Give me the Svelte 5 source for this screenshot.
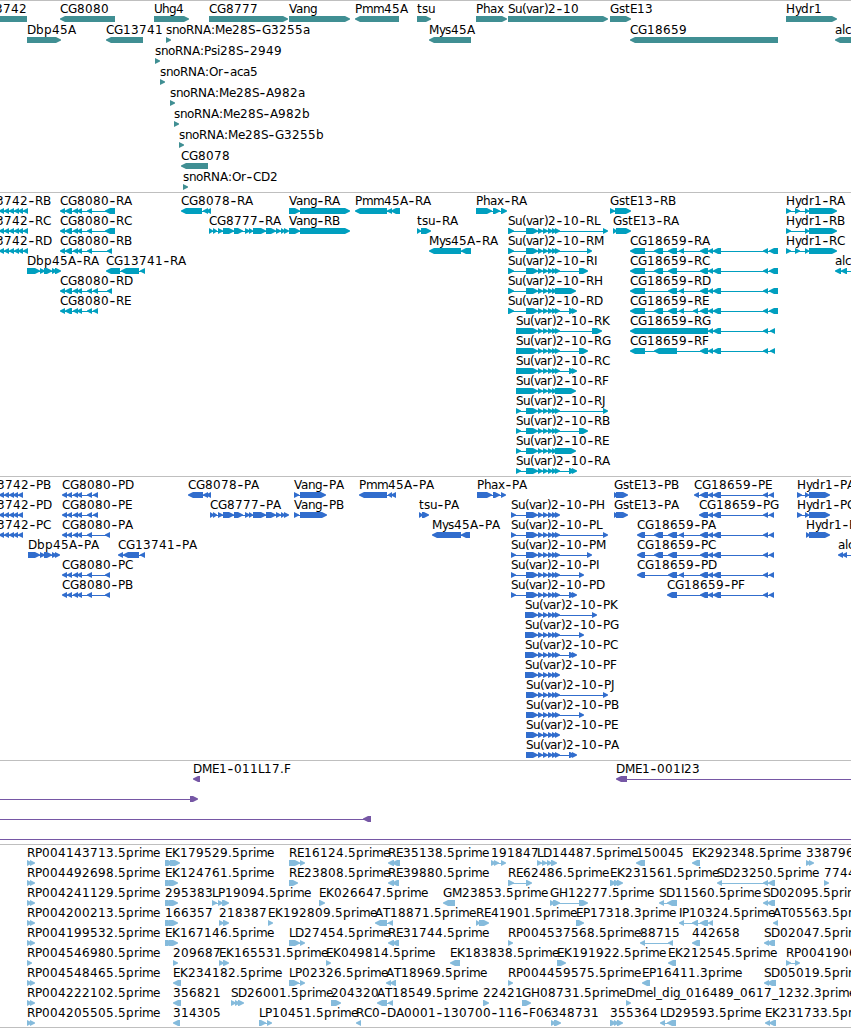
<script lang="ts">
  // [row, x, label, strand, exons]; exons are "start-end" pairs in px
  type Feature = [number, number, string, '+' | '-', string];

  const cg8777 = '213-217 218-223 223-234 234-243 245-250 249-253 253-266 266-276 276-281 281-285 284-289';
  const suMid = '538-543 543-548 548-553 552-557 555-560';
  const su = '526-538 ' + suMid;
  const cgEnd = '700-708 708-713 713-721 763-768';
  const ekA = '165-173 169-178';
  const rp = '27-32 30-35';

  const genes: Feature[] = [
    [0, -5, '3742', '-', '-20-27'],
    [0, 60, 'CG8080', '-', '60-115'],
    [0, 154, 'Uhg4', '+', '154-189'],
    [0, 209, 'CG8777', '+', '209-288'],
    [0, 289, 'Vang', '+', '289-350'],
    [0, 355, 'Pmm45A', '-', '355-399'],
    [0, 417, 'tsu', '+', '417-431'],
    [0, 476, 'Phax', '+', '476-507'],
    [0, 508, 'Su(var)2-10', '+', '508-608'],
    [0, 610, 'GstE13', '+', '610-631'],
    [0, 786, 'Hydr1', '+', '786-837'],
    [1, 27, 'Dbp45A', '+', '27-61'],
    [1, 106, 'CG13741', '-', '106-143'],
    [1, 166, 'snoRNA:Me28S-G3255a', '+', '166-171'],
    [1, 429, 'Mys45A', '-', '429-471'],
    [1, 630, 'CG18659', '-', '630-778'],
    [1, 835, 'alc', '-', '835-870'],
    [2, 155, 'snoRNA:Psi28S-2949', '+', '155-160'],
    [3, 160, 'snoRNA:Or-aca5', '+', '160-165'],
    [4, 170, 'snoRNA:Me28S-A982a', '+', '170-175'],
    [5, 174, 'snoRNA:Me28S-A982b', '+', '174-179'],
    [6, 179, 'snoRNA:Me28S-G3255b', '+', '179-184'],
    [7, 181, 'CG8078', '-', '181-208'],
    [8, 183, 'snoRNA:Or-CD2', '+', '183-188']
  ];

  const transcripts: Feature[] = [
    ...['RB', 'RC', 'RD'].map((n, i): Feature => [i, -4, '3742-' + n, '-', '-1-4 4-9 9-14 14-19 18-23 23-28']),
    [0, 60, 'CG8080-RA', '-', '60-65 65-72 73-78 77-82 87-92 105-115'],
    [1, 60, 'CG8080-RC', '-', '60-65 65-72 73-78 77-82 87-92 105-115'],
    [2, 60, 'CG8080-RB', '-', '60-65 65-72 73-78 77-82 87-92 107-112'],
    [4, 60, 'CG8080-RD', '-', '60-65 65-72 73-78 77-82 87-92 93-98 107-112'],
    [5, 60, 'CG8080-RE', '-', '60-65 65-72 73-78 77-82 87-92 93-98'],
    [3, 27, 'Dbp45A-RA', '+', '27-40 40-45 44-52 52-57 55-61'],
    [3, 106, 'CG13741-RA', '-', '106-120 121-139 140-145'],
    [0, 181, 'CG8078-RA', '-', '181-202 203-208 206-211'],
    [1, 209, 'CG8777-RA', '+', '209-213 ' + cg8777],
    [0, 289, 'Vang-RA', '+', '289-300 300-350'],
    [1, 289, 'Vang-RB', '+', '289-300 300-350'],
    [0, 355, 'Pmm45A-RA', '-', '355-387 387-392 391-400'],
    [1, 417, 'tsu-RA', '+', '417-421 421-431'],
    [2, 429, 'Mys45A-RA', '-', '429-461 461-471'],
    [0, 476, 'Phax-RA', '+', '476-492 493-500 501-507'],
    [1, 508, 'Su(var)2-10-RL', '+', `508-514 ${su} 603-608`],
    [2, 508, 'Su(var)2-10-RM', '+', `508-514 ${su} 587-592`],
    [3, 508, 'Su(var)2-10-RI', '+', `508-514 ${su} 579-588`],
    [4, 508, 'Su(var)2-10-RH', '+', `508-514 ${su} 555-576`],
    [5, 508, 'Su(var)2-10-RD', '+', `508-514 ${su} 569-575 572-577`],
    [6, 516, 'Su(var)2-10-RK', '+', `516-538 ${suMid} 592-602`],
    [7, 516, 'Su(var)2-10-RG', '+', `516-538 ${suMid} 579-588`],
    [8, 516, 'Su(var)2-10-RC', '+', `516-538 ${suMid} 569-575 572-577`],
    [9, 516, 'Su(var)2-10-RF', '+', `516-538 ${suMid} 555-576`],
    [10, 516, 'Su(var)2-10-RJ', '+', `516-521 ${su} 603-608`],
    [11, 516, 'Su(var)2-10-RB', '+', `516-521 ${su} 579-588`],
    [12, 516, 'Su(var)2-10-RE', '+', `516-521 ${su} 555-576`],
    [13, 516, 'Su(var)2-10-RA', '+', `516-521 ${su} 569-575 572-577`],
    [0, 610, 'GstE13-RB', '+', '610-615 615-631'],
    [1, 613, 'GstE13-RA', '+', '613-617 616-631'],
    [2, 630, 'CG18659-RA', '-', `630-645 654-663 668-677 679-684 ${cgEnd} 769-778`],
    [3, 630, 'CG18659-RC', '-', `630-645 654-663 668-677 ${cgEnd} 769-778`],
    [4, 630, 'CG18659-RD', '-', `630-645 668-677 679-684 ${cgEnd} 769-778`],
    [5, 630, 'CG18659-RE', '-', `630-645 654-663 668-677 679-684 693-698 ${cgEnd} 769-778`],
    [6, 630, 'CG18659-RG', '-', '630-708 708-713 713-721 763-768 770-775'],
    [7, 630, 'CG18659-RF', '-', `630-645 654-677 ${cgEnd} 770-775`],
    [0, 786, 'Hydr1-RA', '+', '786-791 795-800 805-809 809-837'],
    [1, 786, 'Hydr1-RB', '+', '786-791 805-809 809-837'],
    [2, 786, 'Hydr1-RC', '+', '786-791 795-800 805-809 809-837'],
    [3, 835, 'alc-RA', '-', '835-841 841-847 860-870']
  ];

  const proteins: Feature[] = [
    ...['PB', 'PD', 'PC'].map((n, i): Feature => [i, -3, '3742-' + n, '-', '-1-4 4-9 9-14 13-18 18-23']),
    [0, 62, 'CG8080-PD', '-', '62-67 67-72 73-78 77-82 87-92 93-98'],
    [1, 62, 'CG8080-PE', '-', '62-67 67-72 73-78 77-82 87-92 93-98'],
    [2, 62, 'CG8080-PA', '-', '62-67 67-72 73-78 77-82 87-92 105-110'],
    [4, 62, 'CG8080-PC', '-', '62-67 67-72 73-78 77-82 87-92 105-110'],
    [5, 62, 'CG8080-PB', '-', '62-67 67-72 73-78 77-82 87-92 105-110'],
    [3, 28, 'Dbp45A-PA', '+', '28-40 40-45 44-52 52-57 55-60'],
    [3, 118, 'CG13741-PA', '-', '118-123 123-139 140-145'],
    [0, 188, 'CG8078-PA', '-', '188-203 203-208 206-211'],
    [1, 210, 'CG8777-PA', '+', '210-214 ' + cg8777],
    [0, 294, 'Vang-PA', '+', '294-299 300-326'],
    [1, 294, 'Vang-PB', '+', '294-299 300-327'],
    [0, 359, 'Pmm45A-PA', '-', '359-387 388-392 391-396'],
    [1, 419, 'tsu-PA', '+', '419-423 422-429'],
    [2, 432, 'Mys45A-PA', '-', '432-461 461-470'],
    [0, 477, 'Phax-PA', '+', '477-492 493-500 501-506'],
    [1, 511, 'Su(var)2-10-PH', '+', `511-516 ${su}`],
    [2, 511, 'Su(var)2-10-PL', '+', `511-516 ${su} 603-608`],
    [3, 511, 'Su(var)2-10-PM', '+', `511-516 ${su} 587-592`],
    [4, 511, 'Su(var)2-10-PI', '+', `511-516 ${su} 579-584`],
    [5, 511, 'Su(var)2-10-PD', '+', `511-516 ${su} 569-575 572-577`],
    [6, 525, 'Su(var)2-10-PK', '+', `525-538 ${suMid} 592-597`],
    [7, 525, 'Su(var)2-10-PG', '+', `525-538 ${suMid} 579-584`],
    [8, 525, 'Su(var)2-10-PC', '+', `525-538 ${suMid} 569-575 572-577`],
    [9, 525, 'Su(var)2-10-PF', '+', `525-538 ${suMid}`],
    [10, 526, 'Su(var)2-10-PJ', '+', `${su} 603-608`],
    [11, 526, 'Su(var)2-10-PB', '+', `${su} 579-584`],
    [12, 526, 'Su(var)2-10-PE', '+', su],
    [13, 526, 'Su(var)2-10-PA', '+', `${su} 569-575 572-577`],
    [0, 614, 'GstE13-PB', '+', '614-618 616-628'],
    [1, 614, 'GstE13-PA', '+', '614-618 616-628'],
    [0, 694, 'CG18659-PE', '-', `694-699 ${cgEnd} 769-774`],
    [1, 699, 'CG18659-PG', '-', '699-708 708-713 713-721 763-768 769-774'],
    [2, 637, 'CG18659-PA', '-', `637-645 654-663 668-677 679-684 ${cgEnd} 769-774`],
    [3, 637, 'CG18659-PC', '-', `637-645 654-663 668-677 ${cgEnd} 769-774`],
    [4, 637, 'CG18659-PD', '-', `637-645 668-677 679-684 ${cgEnd} 769-774`],
    [5, 667, 'CG18659-PF', '-', `667-677 ${cgEnd} 769-774`],
    [0, 797, 'Hydr1-PA', '+', '797-802 805-809 809-830'],
    [1, 797, 'Hydr1-PC', '+', '797-802 805-809 809-830'],
    [2, 806, 'Hydr1-PB', '+', '806-810 809-830'],
    [3, 838, 'alc-PA', '-', '838-843 842-847 860-870']
  ];

  const bacs: Feature[] = [
    [0, 193, 'DME1-011L17.F', '-', '193-200'],
    [0, 616, 'DME1-001I23', '-', '616-627 900-910'],
    [1, 0, '', '+', '-20--10 190-198'],
    [2, 0, '', '-', '-20--10 363-371'],
    [3, 0, '', '+', '-20--10 900-910']
  ];

  const ests: Feature[] = [
    [0, 27, 'RP004143713.5prime', '+', rp],
    [0, 165, 'EK179529.5prime', '+', '165-173 170-180'],
    [0, 289, 'RE16124.5prime', '+', '289-300 300-305'],
    [0, 388, 'RE35138.5prime', '-', '388-394 392-400'],
    [0, 491, '191847', '+', '491-496 494-499 501-506'],
    [0, 537, 'LD14487.5prime', '+', '537-542 542-547 547-552 551-557'],
    [0, 636, '150045', '-', '636-645'],
    [0, 692, 'EK292348.5prime', '-', '692-700'],
    [0, 806, '338796', '+', '806-811 809-814'],
    [1, 27, 'RP004492698.5prime', '+', rp],
    [1, 165, 'EK124761.5prime', '+', ekA],
    [1, 289, 'RE23808.5prime', '+', '289-298'],
    [1, 388, 'RE39880.5prime', '-', '388-394 392-399'],
    [1, 508, 'RE62486.5prime', '+', '508-514 526-532'],
    [1, 610, 'EK231561.5prime', '+', '610-616 614-620 617-623'],
    [1, 717, 'SD23250.5prime', '-', '717-722 763-768 768-775'],
    [1, 824, '7744', '+', '824-829'],
    [2, 27, 'RP004241129.5prime', '+', rp],
    [2, 165, '295383', '+', ekA],
    [2, 212, 'LP19094.5prime', '+', '212-217 218-223 222-229'],
    [2, 319, 'EK026647.5prime', '+', '319-325'],
    [2, 443, 'GM23853.5prime', '-', '443-455'],
    [2, 550, 'GH12277.5prime', '+', '550-555 553-560 579-588'],
    [2, 659, 'SD11560.5prime', '-', '659-664 667-677'],
    [2, 763, 'SD02095.5prime', '-', '763-768 767-775'],
    [3, 27, 'RP004200213.5prime', '+', rp],
    [3, 165, '166357', '+', ekA],
    [3, 219, '218387', '+', '219-224 223-229'],
    [3, 268, 'EK192809.5prime', '+', '268-273'],
    [3, 375, 'AT18871.5prime', '-', '375-387 388-393'],
    [3, 476, 'RE41901.5prime', '+', '476-480 479-489'],
    [3, 576, 'EP17318.3prime', '+', '576-584'],
    [3, 679, 'IP10324.5prime', '-', '679-684 692-698 700-708 708-713'],
    [3, 773, 'AT05563.5prime', '-', '773-778'],
    [4, 27, 'RP004199532.5prime', '+', rp],
    [4, 165, 'EK167146.5prime', '+', ekA],
    [4, 289, 'LD27454.5prime', '+', '289-300 300-305'],
    [4, 388, 'RE31744.5prime', '-', '388-394 392-399'],
    [4, 508, 'RP004537568.5prime', '+', '508-513'],
    [4, 640, '88715', '-', '640-645 668-673'],
    [4, 692, '442658', '-', '692-700'],
    [4, 764, 'SD02047.5prime', '-', '764-769 767-775'],
    [5, 27, 'RP004546980.5prime', '+', '27-32'],
    [5, 173, '209687', '+', '173-178'],
    [5, 219, 'EK165531.5prime', '+', '219-224 223-229'],
    [5, 326, 'EK049814.5prime', '+', '326-331'],
    [5, 450, 'EK183838.5prime', '-', '450-460'],
    [5, 557, 'EK191922.5prime', '+', '557-566'],
    [5, 668, 'EK212545.5prime', '-', '668-676'],
    [5, 786, 'RP0041906', '+', '786-791 795-800'],
    [6, 27, 'RP004548465.5prime', '+', rp],
    [6, 173, 'EK234182.5prime', '-', '173-181'],
    [6, 289, 'LP02326.5prime', '+', '289-299 300-305'],
    [6, 386, 'AT18969.5prime', '-', '386-391 390-396'],
    [6, 508, 'RP004459575.5prime', '+', '508-513'],
    [6, 642, 'EP16411.3prime', '-', '642-650'],
    [6, 764, 'SD05019.5prime', '-', '764-769 767-776'],
    [7, 27, 'RP004222102.5prime', '+', rp],
    [7, 173, '356821', '-', '173-181'],
    [7, 231, 'SD26001.5prime', '+', '231-236 235-240 238-244'],
    [7, 331, '204320', '+', '331-341'],
    [7, 377, 'AT18549.5prime', '-', '377-387 388-393'],
    [7, 483, '22421', '+', '483-489'],
    [7, 522, 'GH08731.5prime', '+', '522-531'],
    [7, 626, 'Dmel_dig_016489_0617_1232.3prime', '+', '626-631'],
    [8, 27, 'RP004205505.5prime', '+', rp],
    [8, 173, '314305', '-', '173-180'],
    [8, 259, 'LP10451.5prime', '+', '259-266 267-272'],
    [8, 356, 'RC0-DA0001-130700-116-F06', '-', '356-361'],
    [8, 551, '348731', '+', '551-556 554-561'],
    [8, 610, '355364', '+', '610-616 614-619 617-623'],
    [8, 660, 'LD29593.5prime', '-', '660-665 667-676'],
    [8, 765, 'EK231733.5prime', '-', '765-770 769-776']
  ];

  const tracks = [
    { name: 'genes', height: 192, pitch: 21, features: genes },
    { name: 'transcripts', height: 284, pitch: 20, features: transcripts },
    { name: 'proteins', height: 284, pitch: 20, features: proteins },
    { name: 'bacs', height: 84, pitch: 20, features: bacs },
    { name: 'ests', height: 183, pitch: 20, features: ests }
  ];

  // whole-pixel advances for the label font
  const advances: Record<string, number> = {
    A: 8, C: 8, D: 9, E: 7, F: 7, G: 9, H: 9, I: 3, J: 4, K: 8, L: 6, M: 10, N: 9, O: 9, P: 7, R: 8,
    S: 7, T: 7, U: 8, V: 7, a: 7, b: 8, c: 6, d: 8, e: 7, g: 7, h: 7, i: 3, l: 3, m: 11, n: 7, o: 7,
    p: 8, r: 5, s: 6, t: 5, u: 7, v: 6, x: 7, y: 6, '-': 7, '_': 6, '.': 4, ':': 4, '(': 4, ')': 4
  };

  function glyphX(label: string, x: number) {
    let pos = x;
    return [...label].map((ch) => {
      const at = ch === '-' ? pos + 0.5 : pos;
      pos += advances[ch] ?? 8;
      return at;
    }).join(' ');
  }

  // hyphens are set larger, so they sit a pixel lower to stay centred
  function glyphY(label: string, y: number) {
    return [...label].map((ch) => (ch === '-' ? y + 1 : y)).join(' ');
  }

  function exons(spec: string) {
    return spec.split(' ').map((s) => {
      const m = s.match(/^(-?\d+)-(-?\d+)$/)!;
      return [Number(m[1]), Number(m[2])];
    });
  }

  function arrow([a, b]: number[], strand: string, y: number) {
    const head = Math.min(5, b - a);
    if (strand === '+') {
      return `M${a} ${y}H${b - head}L${b} ${y + 2.5}V${y + 3.5}L${b - head} ${y + 6}H${a}Z`;
    }
    return `M${b} ${y}H${a + head}L${a} ${y + 2.5}V${y + 3.5}L${a + head} ${y + 6}H${b}Z`;
  }
</script>

<main class="browser">
  {#each tracks as track}
    <section class="track {track.name}" style:height="{track.height}px">
      <svg width="100%" height="100%">
        {#each track.features as [row, x, label, strand, spec]}
          {@const top = row * track.pitch}
          {@const parts = exons(spec)}
          {#if parts.length > 1}
            <rect x={parts[0][0] + 2} y={top + 18} width={parts[parts.length - 1][1] - parts[0][0] - 4} height="1" />
          {/if}
          {#each parts as part}
            <path d={arrow(part, strand, top + 15)} />
          {/each}
          {#if label}
            <text x={glyphX(label, x)} y={glyphY(label, top + 12)}>{#each label.split(/(-)/) as piece}<tspan class:dash={piece === '-'}>{piece}</tspan>{/each}</text>
          {/if}
        {/each}
      </svg>
    </section>
  {/each}
</main>

<style>
  :global(body) {
    margin: 0;
    background: #fff;
  }

  .browser {
    width: 851px;
    height: 1028px;
    box-sizing: border-box;
    border-bottom: 1px solid #bfbfbf;
    overflow: hidden;
  }

  .track {
    box-sizing: border-box;
    border-top: 1px solid #bfbfbf;
    overflow: hidden;
  }

  svg {
    display: block;
  }

  text {
    font-family: "DejaVu Sans", sans-serif;
    font-size: 12px;
    fill: #000;
  }

  .dash {
    font-size: 16px;
  }

  .genes { fill: #408f93; }
  .transcripts { fill: #009fbf; }
  .proteins { fill: #316dcd; }
  .bacs { fill: #7657a5; }
  .ests { fill: #85bbdc; }
</style>
